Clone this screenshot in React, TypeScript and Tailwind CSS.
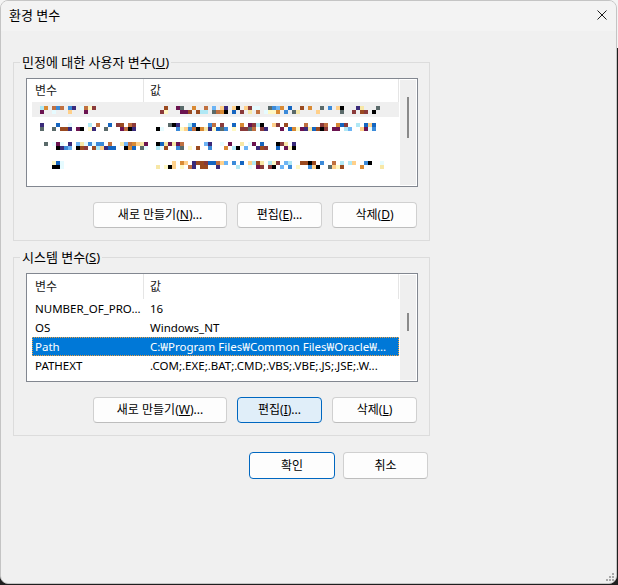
import type { ReactNode } from "react"

// mosaic palette for the blurred user variables
const PALETTE = [
  "#000000", "#3b8ad9", "#6cb4f5", "#f7e7a6", "#fff8c4", "#d98a34", "#b0e8f5",
  "#e6fbff", "#6b1450", "#8a3a3a", "#3a2a7a", "#1565c0", "#c07040", "#ffd08a",
  "#5a6a6a", "#9a4a20",
]

function Mosaic({ seed, w }: { seed: number; w: number }) {
  let s = seed
  const rnd = () => {
    s = (s * 1103515245 + 12345) & 0x7fffffff
    return s / 0x7fffffff
  }
  const cols = Math.round(w / 4)
  const cells: string[] = []
  for (let i = 0; i < cols * 2; i++) {
    cells.push(rnd() < 0.45 ? "transparent" : PALETTE[Math.floor(rnd() * PALETTE.length)])
  }
  return (
    <div className="flex h-[8px] flex-wrap" style={{ width: cols * 4 }}>
      {cells.map((c, i) => (
        <span key={i} className="h-1 w-1" style={{ background: c }} />
      ))}
    </div>
  )
}

function Btn({ children, w, focus }: { children: ReactNode; w: string; focus?: boolean }) {
  return (
    <button
      className={
        "flex h-[26px] items-center justify-center rounded-[4px] border text-[12px] text-black " +
        w +
        (focus ? " border-[#0067c0] bg-[#e0eef9]" : " border-[#d0d0d0] border-b-[#bdbdbd] bg-[#fdfdfd]")
      }
    >
      {children}
    </button>
  )
}

function ListBox({ header, thumb, children }: { header: string; thumb: string; children: ReactNode }) {
  return (
    <div className="mt-[8px] flex h-[109px] w-[392px] border border-[#828790] bg-white">
      <div className="flex w-[372px] flex-col overflow-hidden">
        <div className={"flex shrink-0 text-[12px] text-[#1a1a1a] " + header}>
          <div className="flex w-[117px] items-center border-r border-[#e5e5e5] pl-[8px]">변수</div>
          <div className="flex flex-1 items-center border-r border-[#e5e5e5] pl-[6px]">값</div>
        </div>
        {children}
      </div>
      <div className="m-[1px] w-[16px] bg-[#efefef]">
        <div className={"ml-[7px] w-[2px] bg-[#8a8a8a] " + thumb} />
      </div>
    </div>
  )
}

function Row({ name, value, selected }: { name: string; value: string; selected?: boolean }) {
  return (
    <div
      className={
        "ml-[5px] flex h-[19px] shrink-0 items-center whitespace-nowrap text-[11.5px] " +
        (selected ? "bg-[#0078d7] text-white outline-1 -outline-offset-1 outline-dotted outline-[#f0a040]" : "text-black")
      }
    >
      <div className="w-[115px] overflow-hidden pl-[3px]">{name}</div>
      <div className="flex-1 overflow-hidden pl-[3px]">{value}</div>
    </div>
  )
}

function MosaicRow({ a, b, seed, h, hover }: { a: number; b: number; seed: number; h: string; hover?: boolean }) {
  return (
    <div className={"ml-[5px] flex shrink-0 items-center " + h + (hover ? " bg-[#efefef]" : "")}>
      <div className="w-[115px] pl-[8px]">
        <Mosaic seed={seed} w={a} />
      </div>
      <div className="flex-1 pl-[9px]">
        <Mosaic seed={seed * 7 + 3} w={b} />
      </div>
    </div>
  )
}

export default function App() {
  return (
    <div className="h-[585px] w-[618px] bg-[linear-gradient(to_bottom,#f4f4f4_48px,#1f1f1f_48px)] font-['Noto_Sans','Noto_Sans_CJK_KR',sans-serif]">
      <div className="relative flex h-[584px] w-[617px] flex-col overflow-hidden rounded-[8px] border border-[#c4c4c4] bg-[#f0f0f0]">
        {/* title bar */}
        <div className="flex h-[30px] shrink-0 bg-[#f3f3f3]">
          <div className="pl-[8px] pt-[5px] text-[13px] text-black">환경 변수</div>
          <svg className="ml-auto mr-[9px] mt-[9px]" width="10" height="10" viewBox="0 0 10 10">
            <path d="M0.5 0.5L9.5 9.5M9.5 0.5L0.5 9.5" stroke="#1a1a1a" strokeWidth="1" />
          </svg>
        </div>

        <div className="flex flex-1 flex-col pt-[23px] text-[12px] text-black">
          {/* user variables */}
          <fieldset className="ml-[12px] w-[417px] border border-[#dcdcdc] pb-[12px] pl-[12px] pr-[11px]">
            <legend className="-ml-[6px] px-[2px] text-[13px] leading-[16px]">
              민정에 대한 사용자 변수(<u>U</u>)
            </legend>
            <ListBox header="h-[23px]" thumb="mt-[17px] h-[41px]">
              <MosaicRow seed={11} a={56} b={224} h="h-[15px]" hover />
              <MosaicRow seed={23} a={96} b={220} h="h-[19px]" />
              <MosaicRow seed={37} a={108} b={144} h="h-[19px]" />
              <MosaicRow seed={53} a={24} b={228} h="h-[19px]" />
            </ListBox>
            <div className="mt-[15px] flex justify-end gap-[10px] pr-[1px]">
              <Btn w="w-[134px]">
                새로 만들기(<u>N</u>)...
              </Btn>
              <Btn w="w-[85px]">
                편집(<u>E</u>)...
              </Btn>
              <Btn w="w-[85px]">
                삭제(<u>D</u>)
              </Btn>
            </div>
          </fieldset>

          {/* system variables */}
          <fieldset className="ml-[12px] mt-[8px] w-[417px] border border-[#dcdcdc] pb-[12px] pl-[12px] pr-[11px]">
            <legend className="-ml-[6px] px-[2px] text-[13px] leading-[16px]">
              시스템 변수(<u>S</u>)
            </legend>
            <ListBox header="h-[25px]" thumb="mt-[38px] h-[18px]">
              <Row name="NUMBER_OF_PRO..." value="16" />
              <Row name="OS" value="Windows_NT" />
              <Row name="Path" value="C:₩Program Files₩Common Files₩Oracle₩..." selected />
              <Row name="PATHEXT" value=".COM;.EXE;.BAT;.CMD;.VBS;.VBE;.JS;.JSE;.W..." />
            </ListBox>
            <div className="mt-[15px] flex justify-end gap-[10px] pr-[1px]">
              <Btn w="w-[134px]">
                새로 만들기(<u>W</u>)...
              </Btn>
              <Btn w="w-[85px]" focus>
                편집(<u>I</u>)...
              </Btn>
              <Btn w="w-[85px]">
                삭제(<u>L</u>)
              </Btn>
            </div>
          </fieldset>

          <div className="ml-[12px] mt-[16px] flex w-[417px] justify-end gap-[8px] pr-[2px]">
            <button className="flex h-[27px] w-[86px] items-center justify-center rounded-[4px] border border-[#0067c0] bg-[#fdfdfd] text-[12px]">
              확인
            </button>
            <button className="flex h-[27px] w-[85px] items-center justify-center rounded-[4px] border border-[#d0d0d0] border-b-[#bdbdbd] bg-[#fdfdfd] text-[12px]">
              취소
            </button>
          </div>
        </div>

        {/* resize grip */}
        <svg className="absolute bottom-[2px] right-[2px]" width="8" height="8" viewBox="0 0 8 8" fill="#a8a8a8">
          <rect x="6" y="0" width="2" height="2" />
          <rect x="3" y="3" width="2" height="2" />
          <rect x="6" y="3" width="2" height="2" />
          <rect x="0" y="6" width="2" height="2" />
          <rect x="3" y="6" width="2" height="2" />
          <rect x="6" y="6" width="2" height="2" />
        </svg>
      </div>
    </div>
  )
}
